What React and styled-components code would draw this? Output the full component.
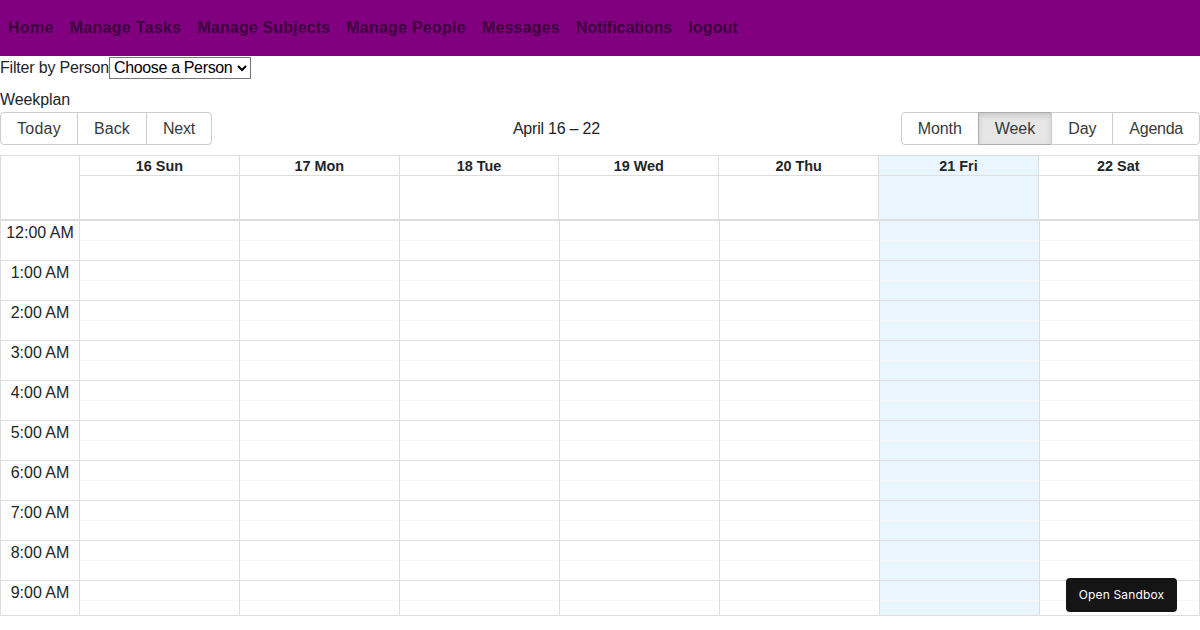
import React from 'react';
import styled, { createGlobalStyle } from 'styled-components';

const GlobalStyle = createGlobalStyle`
	html, body {
		margin: 0;
		height: 100%;
		overflow: hidden;
		background: #fff;
		color: #212529;
		font-family: 'Liberation Sans', Arial, sans-serif;
		font-size: 16px;
		line-height: 1.5;
	}
	* {
		box-sizing: border-box;
	}
`;

const Nav = styled.nav`
	display: flex;
	align-items: center;
	height: 56px;
	background-color: purple;
`;
const NavLink = styled.a`
	padding: 8px;
	font-weight: 700;
	letter-spacing: ${(props) => props.$spacing}px;
	color: rgba(0, 0, 0, 0.55);
	text-decoration: none;
`;
const FilterRow = styled.div`
	height: 32px;
	letter-spacing: -0.19px;
`;
const Select = styled.select`
	width: 142px;
	height: 22px;
	font-family: inherit;
	font-size: 16px;
	letter-spacing: -0.35px;
	color: #000;
	background: #fff;
`;
const Heading = styled.div`
	height: 24px;
	letter-spacing: -0.1px;
`;
const Toolbar = styled.div`
	display: flex;
	align-items: center;
	margin-bottom: 10px;
`;
const ButtonGroup = styled.div`
	display: inline-flex;
`;
const ToolButton = styled.button`
	font-family: inherit;
	font-size: 16px;
	line-height: 21px;
	height: 33px;
	padding: 5px 16px;
	margin-left: -1px;
	letter-spacing: ${(props) => props.$spacing}px;
	color: #373a3c;
	background: ${(props) => (props.$active ? '#e6e6e6' : 'none')};
	border: 1px solid ${(props) => (props.$active ? '#adadad' : '#ccc')};
	box-shadow: ${(props) => (props.$active ? 'inset 0 3px 5px rgba(0, 0, 0, 0.125)' : 'none')};
	&:first-child {
		margin-left: 0;
		border-radius: 4px 0 0 4px;
	}
	&:last-child {
		border-radius: 0 4px 4px 0;
	}
`;
const ToolbarLabel = styled.span`
	flex: 1;
	padding: 0 10px;
	text-align: center;
	letter-spacing: -0.22px;
`;
const TimeView = styled.div`
	height: 461px;
	border: 1px solid #ddd;
	overflow: hidden;
`;
const HeaderRow = styled.div`
	display: flex;
	margin-right: 0.3px;
	border-bottom: 2px solid #ddd;
`;
const HeaderGutter = styled.div`
	width: 78px;
	flex: none;
`;
const HeaderColumn = styled.div`
	flex: 1;
	min-width: 0;
	border-left: 1px solid #ddd;
	background: ${(props) => (props.$today ? '#eaf6ff' : 'transparent')};
	&:last-child {
		border-right: 1px solid #ddd;
	}
`;
const HeaderCell = styled.div`
	height: 20px;
	border-bottom: 1px solid #ddd;
	font-size: 14.4px;
	line-height: 21px;
	font-weight: 700;
	text-align: center;
`;
const AllDay = styled.div`
	height: 43px;
`;
const Body = styled.div`
	display: flex;
`;
const Gutter = styled.div`
	width: 78px;
	flex: none;
`;
const DayColumn = styled.div`
	flex: 1;
	min-width: 0;
	border-left: 1px solid #ddd;
	background: ${(props) => (props.$today ? '#eaf6ff' : 'transparent')};
`;
const SlotGroup = styled.div`
	height: 40px;
	border-bottom: 1px solid #ddd;
`;
const Slot = styled.div`
	height: 20px;
	border-bottom: 1px solid #f7f7f7;
`;
const TimeLabel = styled.div`
	line-height: 24px;
	text-align: center;
`;
const SandboxButton = styled.a`
	position: fixed;
	left: 1066px;
	top: 578px;
	width: 111px;
	height: 34px;
	display: flex;
	align-items: center;
	justify-content: center;
	background: #151515;
	border-radius: 4px;
	color: #fff;
	font-family: Inter, sans-serif;
	font-size: 12px;
	letter-spacing: 0.15px;
`;

const links = [
	{ label: 'Home', spacing: 0.3 },
	{ label: 'Manage Tasks', spacing: 0.3 },
	{ label: 'Manage Subjects', spacing: 0.14 },
	{ label: 'Manage People', spacing: 0.24 },
	{ label: 'Messages', spacing: 0.2 },
	{ label: 'Notifications', spacing: -0.05 },
	{ label: 'logout', spacing: 0.15 },
];
const navButtons = [
	{ label: 'Today', spacing: 0.25 },
	{ label: 'Back', spacing: 0.1 },
	{ label: 'Next', spacing: -0.2 },
];
const viewButtons = [
	{ label: 'Month', spacing: -0.1 },
	{ label: 'Week', spacing: -0.05, active: true },
	{ label: 'Day', spacing: -0.1 },
	{ label: 'Agenda', spacing: -0.25 },
];
const days = ['16 Sun', '17 Mon', '18 Tue', '19 Wed', '20 Thu', '21 Fri', '22 Sat'];
const hours = ['12:00 AM', '1:00 AM', '2:00 AM', '3:00 AM', '4:00 AM', '5:00 AM', '6:00 AM', '7:00 AM', '8:00 AM', '9:00 AM'];

function App() {
	return (
		<>
			<GlobalStyle />
			<Nav>
				{links.map((link) => (
					<NavLink key={link.label} $spacing={link.spacing}>
						{link.label}
					</NavLink>
				))}
			</Nav>
			<FilterRow>
				Filter by Person
				<Select>
					<option>Choose a Person</option>
				</Select>
			</FilterRow>
			<Heading>Weekplan</Heading>
			<Toolbar>
				<ButtonGroup>
					{navButtons.map((button) => (
						<ToolButton key={button.label} $spacing={button.spacing}>
							{button.label}
						</ToolButton>
					))}
				</ButtonGroup>
				<ToolbarLabel>April 16 – 22</ToolbarLabel>
				<ButtonGroup>
					{viewButtons.map((button) => (
						<ToolButton key={button.label} $spacing={button.spacing} $active={button.active}>
							{button.label}
						</ToolButton>
					))}
				</ButtonGroup>
			</Toolbar>
			<TimeView>
				<HeaderRow>
					<HeaderGutter />
					{days.map((day) => (
						<HeaderColumn key={day} $today={day === '21 Fri'}>
							<HeaderCell>{day}</HeaderCell>
							<AllDay />
						</HeaderColumn>
					))}
				</HeaderRow>
				<Body>
					<Gutter>
						{hours.map((hour) => (
							<SlotGroup key={hour}>
								<TimeLabel>{hour}</TimeLabel>
							</SlotGroup>
						))}
					</Gutter>
					{days.map((day) => (
						<DayColumn key={day} $today={day === '21 Fri'}>
							{hours.map((hour) => (
								<SlotGroup key={hour}>
									<Slot />
								</SlotGroup>
							))}
						</DayColumn>
					))}
				</Body>
			</TimeView>
			<SandboxButton>Open Sandbox</SandboxButton>
		</>
	);
}

export default App;
